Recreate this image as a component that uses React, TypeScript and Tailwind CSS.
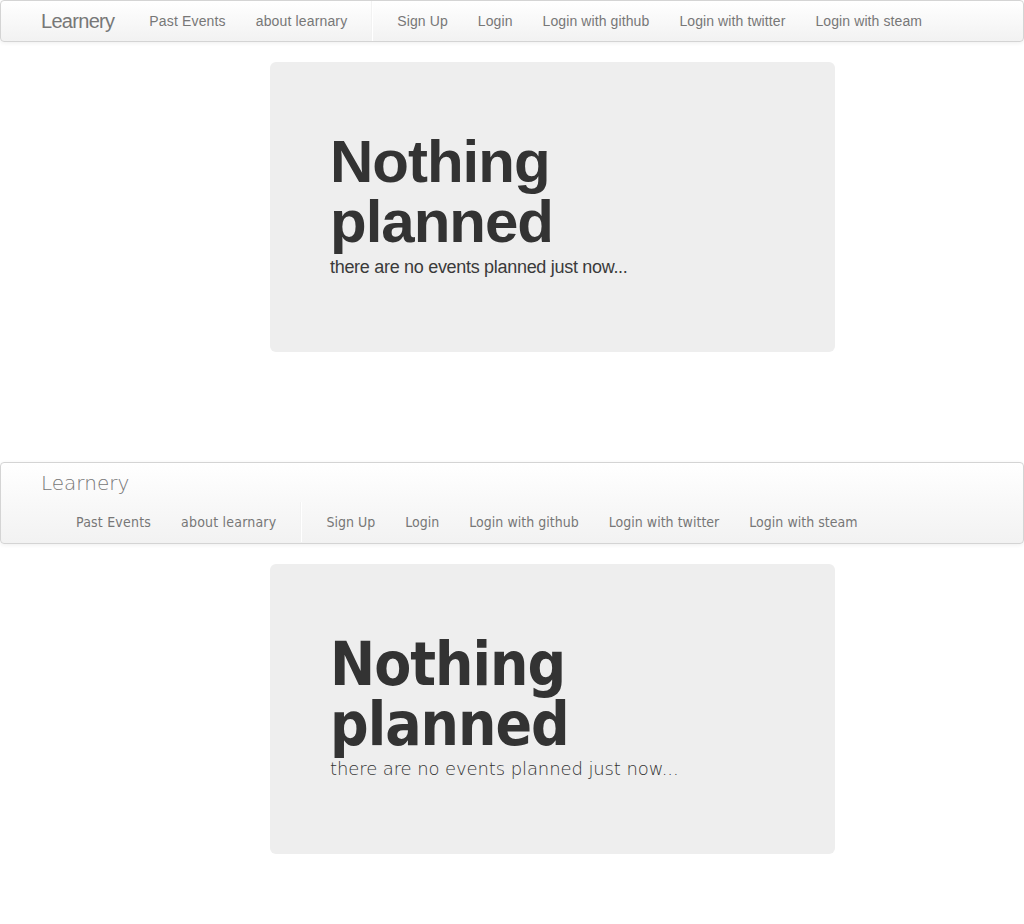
const leftLinks = ["Past Events", "about learnary"];
const rightLinks = ["Sign Up", "Login", "Login with github", "Login with twitter", "Login with steam"];

type Variant = {
  brand: string;
  link: string;
  linkRight: string;
  heading: string;
  lead: string;
  stacked: boolean;
};

const helvetica: Variant = {
  brand: "font-['Liberation_Sans',sans-serif] font-light tracking-[-0.7px]",
  link: "font-['Liberation_Sans',sans-serif] tracking-[0.15px]",
  linkRight: "font-['Liberation_Sans',sans-serif] tracking-[0.1px]",
  heading: "font-['Liberation_Sans',sans-serif] font-bold tracking-[-1px]",
  lead: "font-['Liberation_Sans',sans-serif] font-light tracking-[-0.3px] text-[#3a3a3a]",
  stacked: false,
};

const dejavu: Variant = {
  brand: "font-['DejaVu_Sans',sans-serif] font-extralight",
  link: "font-['DejaVu_Sans_Condensed','DejaVu_Sans',sans-serif] tracking-[0.2px]",
  linkRight: "font-['DejaVu_Sans_Condensed','DejaVu_Sans',sans-serif] tracking-[0.02px]",
  heading: "font-['DejaVu_Sans_Condensed','DejaVu_Sans',sans-serif] font-bold tracking-[-1px]",
  lead: "font-['DejaVu_Sans',sans-serif] font-extralight tracking-[-0.1px]",
  stacked: true,
};

function NavLinks({ v }: { v: Variant }) {
  return (
    <ul className="flex items-stretch">
      {leftLinks.map((l) => (
        <li key={l}>
          <a className={`block px-[15px] py-[10px] text-[14px] leading-[20px] text-[#777777] ${v.link}`}>{l}</a>
        </li>
      ))}
      <li className="mx-[9px] w-[2px] h-[40px] border-l border-l-[#f2f2f2] border-r border-r-white" />
      {rightLinks.map((l) => (
        <li key={l}>
          <a className={`block px-[15px] py-[10px] text-[14px] leading-[20px] text-[#777777] ${v.linkRight}`}>{l}</a>
        </li>
      ))}
    </ul>
  );
}

function Navbar({ v }: { v: Variant }) {
  return (
    <div className="rounded-[4px] border border-[#d4d4d4] bg-gradient-to-b from-white to-[#f2f2f2] shadow-[0_1px_4px_rgba(0,0,0,0.065)]">
      {v.stacked ? (
        <div className="pl-[40px]">
          <a className={`block h-[39px] pt-[8px] text-[20px] leading-[24px] text-[#777777] ${v.brand}`}>Learnery</a>
          <div className="pl-[20px] pb-px">
            <NavLinks v={v} />
          </div>
        </div>
      ) : (
        <div className="flex h-[40px] items-stretch pl-[40px]">
          <a className={`block pr-[20px] pt-[8px] text-[20px] leading-[24px] text-[#777777] ${v.brand}`}>Learnery</a>
          <NavLinks v={v} />
        </div>
      )}
    </div>
  );
}

function Hero({ v }: { v: Variant }) {
  return (
    <div className="ml-[270px] w-[565px] rounded-[6px] bg-[#eeeeee] px-[60px] pt-[70px] pb-[70px] text-[#333333]">
      <h1 className={`max-w-[300px] text-[60px] leading-[60px] ${v.heading}`}>Nothing planned</h1>
      <p className={`text-[18px] leading-[30px] ${v.lead}`}>there are no events planned just now...</p>
    </div>
  );
}

export default function App() {
  return (
    <div className="min-h-[924px] bg-white">
      <Navbar v={helvetica} />
      <div className="mt-[20px]">
        <Hero v={helvetica} />
      </div>
      <div className="mt-[110px]">
        <Navbar v={dejavu} />
      </div>
      <div className="mt-[20px]">
        <Hero v={dejavu} />
      </div>
    </div>
  );
}
